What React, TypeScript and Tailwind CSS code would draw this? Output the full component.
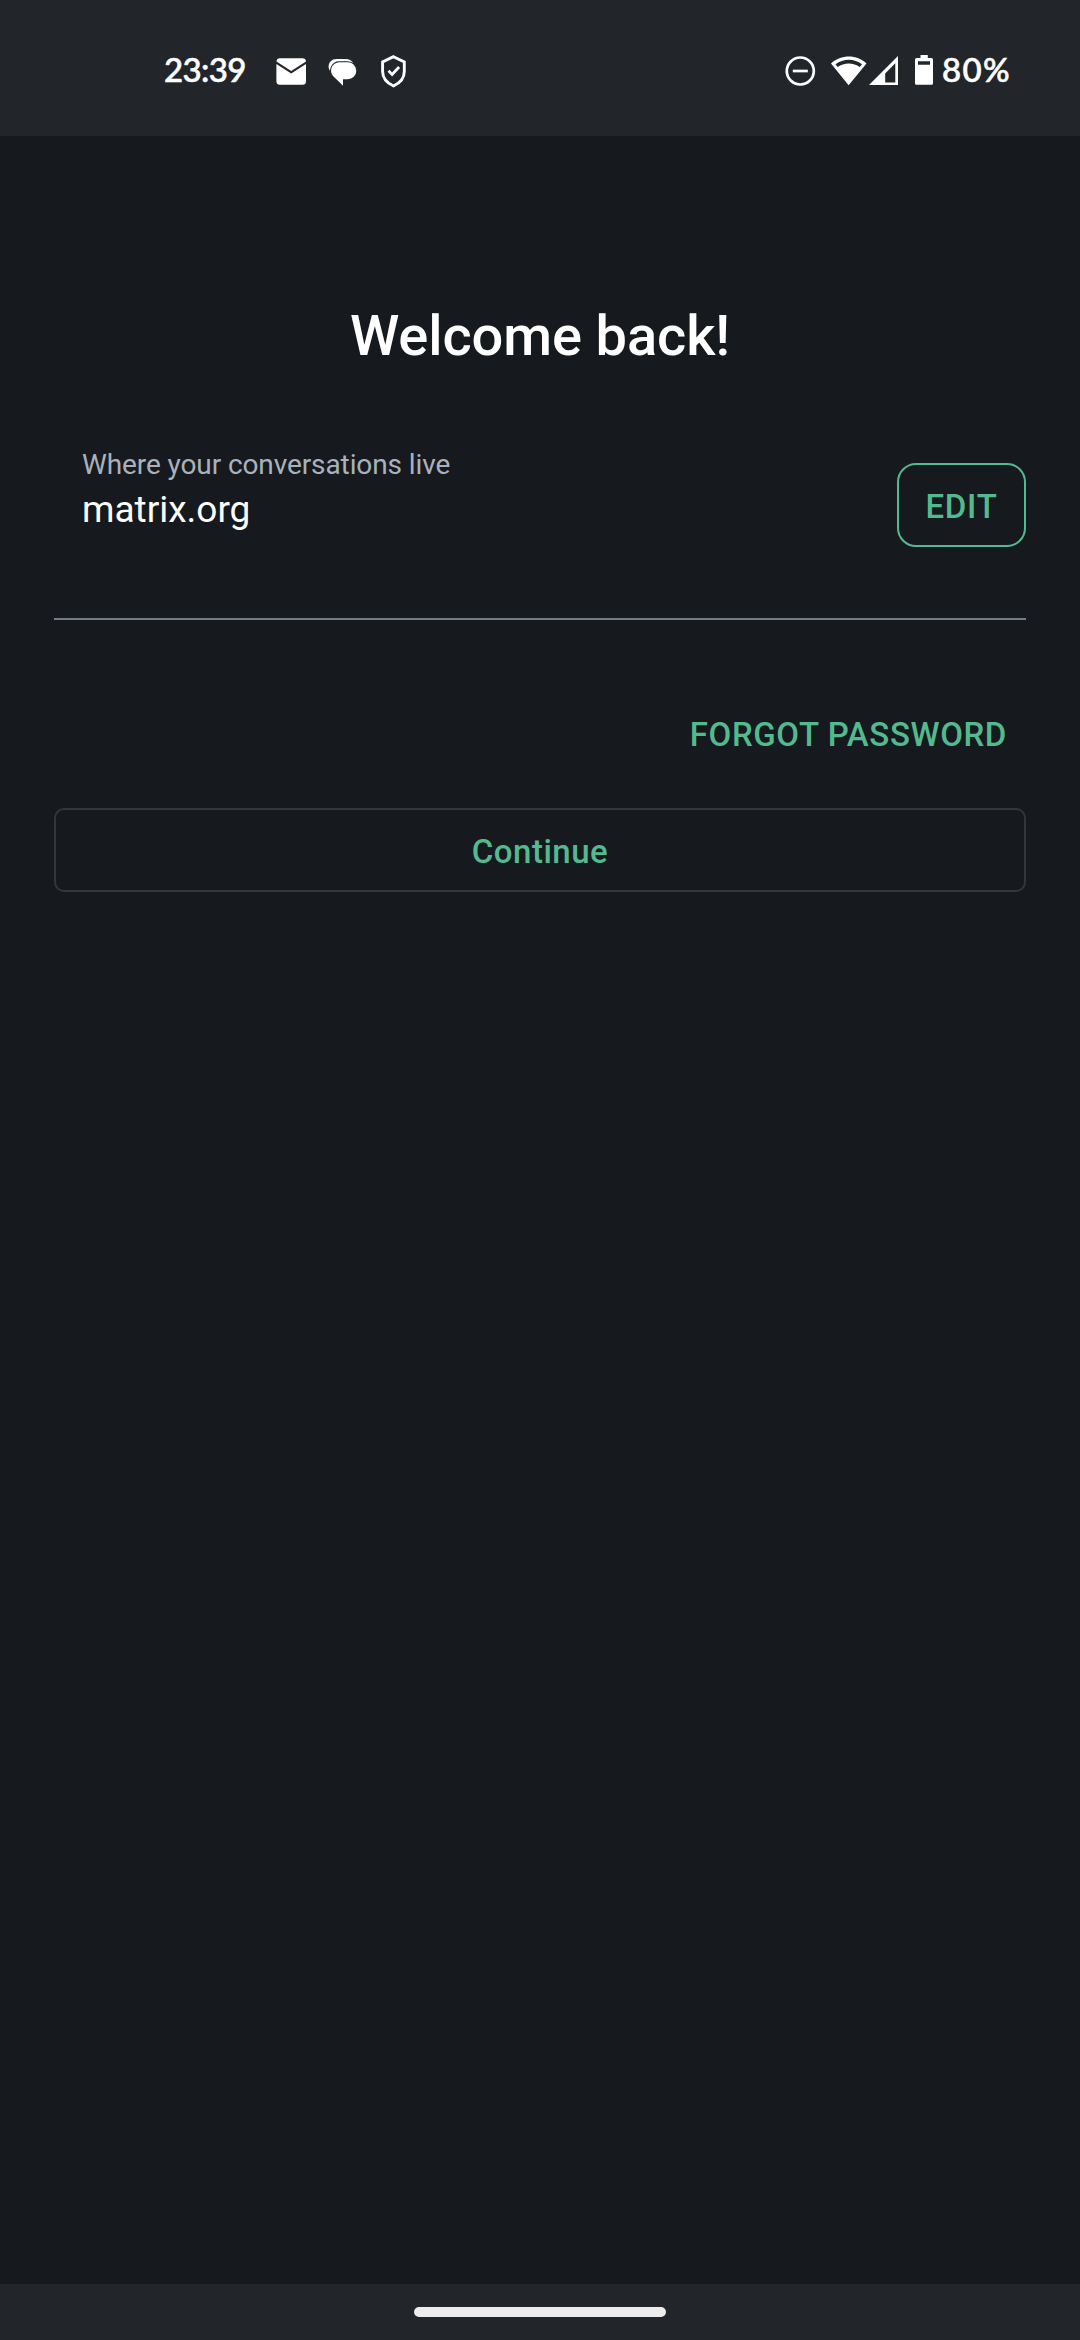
function StatusBar() {
  return (
    <header className="flex h-[136px] shrink-0 items-start justify-between bg-[#22262b] pt-[54px] pr-[69px] pl-[164px] text-white">
      <div className="flex items-start">
        <span className="w-[112px] -translate-y-px font-[Lato] text-[33px] leading-8 font-medium tracking-[-0.6px] [-webkit-text-stroke:0.6px]">23:39</span>
        <svg className="h-8 w-[30px]" viewBox="0 0 30 32" fill="currentColor">
          <path d="M4 4.300h22.500a3.500 3.500 0 0 1 3.500 3.200L15.200 16.900.5 7.500A3.500 3.500 0 0 1 4 4.300Z" />
          <path d="M.4 9.900 15.200 19.600 30 9.900V27.300a3.500 3.500 0 0 1-3.500 3.500H3.900a3.500 3.500 0 0 1-3.500-3.500Z" />
        </svg>
        <svg className="ml-[22px] h-8 w-[30px]" viewBox="0 0 30 32" fill="currentColor">
          <path d="M8.500 5H17.500C21 5 23.500 6.500 25 8.800L12 14 2.500 17.500C-2 12 2 5 8.500 5Z" />
          <path
            d="M11.300 8.200H19.800A8.500 8.500 0 0 1 19.800 25.200H15V31.800L5.300 22.300C.5 17 4 8.200 11.300 8.200Z"
            stroke="#22262b"
            strokeWidth="2"
            paintOrder="stroke"
          />
        </svg>
        <svg className="ml-[23px] h-10 w-[26px] -translate-y-1" viewBox="0 0 26 40" fill="none" stroke="currentColor" strokeWidth="2.900">
          <path d="M12.500 6.700 23.300 12V21.500C23.300 28 19 33 12.500 36 6 33 1.600 28 1.600 21.500V12Z" />
          <path d="m7.500 20.800 3.600 3.700 7-7.500" strokeWidth="2.700" />
        </svg>
      </div>
      <div className="flex items-start">
        <svg className="h-8 w-8" viewBox="0 0 32 32" fill="none" stroke="currentColor" strokeWidth="2.700">
          <circle cx="15.300" cy="17" r="13.500" />
          <path d="M7.800 17h15" />
        </svg>
        <svg className="ml-[14px] h-8 w-9" viewBox="0 0 36 32" fill="currentColor">
          <path fillRule="evenodd" d="M0 9.500C10 .2 26 .2 35.500 9.500L17.600 31.300ZM4.500 10.200 6.700 13.100C13 8.300 22.500 8.300 28.800 13.100L31 10.200C23 4.200 12.500 4.200 4.500 10.200Z" />
        </svg>
        <svg className="ml-[2px] h-8 w-[30px]" viewBox="0 0 30 32" fill="currentColor">
          <path fillRule="evenodd" d="M29 2V31H0ZM26.300 9.300 16.200 19.400V28.600H26.300Z" />
        </svg>
        <svg className="ml-4 h-8 w-[18px]" viewBox="0 0 18 32" fill="currentColor">
          <path fillRule="evenodd" d="M5.500 1h7.300v3H16.500A1.500 1.500 0 0 1 18 5.500V29.300A1.500 1.500 0 0 1 16.500 30.800H1.500A1.500 1.500 0 0 1 0 29.300V5.500A1.500 1.500 0 0 1 1.500 4h4ZM3 7.300v3.400h12V7.300Z" />
        </svg>
        <span className="ml-[9px] w-[69px] -translate-y-px font-[Lato] text-[33px] leading-8 font-medium tracking-[1.4px] whitespace-nowrap [-webkit-text-stroke:0.6px]">80%</span>
      </div>
    </header>
  );
}

export default function App() {
  return (
    <div className="flex h-[2340px] w-[1080px] flex-col bg-[#161a1e] font-[Roboto,sans-serif]">
      <StatusBar />
      <main className="flex flex-1 flex-col px-[54px] pt-[167px]">
        <h1 className="text-center text-[56px] leading-[66px] font-medium tracking-[-0.1px] text-white">Welcome back!</h1>
        <section className="mt-[69px] flex h-[82px] items-start justify-between pl-[28px]">
          <div className="pt-[11px]">
            <p className="text-[28px] leading-8 tracking-[-0.1px] text-[#a9b2bc]">Where your conversations live</p>
            <p className="mt-[7px] text-[37px] leading-[44px] text-white">matrix.org</p>
          </div>
          <button className="mt-[25px] h-[84px] w-[129px] rounded-[19px] border-2 border-[#54b98f] pt-[3px] text-[33px] font-medium tracking-[0.7px] text-[#54b98f]">
            EDIT
          </button>
        </section>
        <hr className="mt-[98px] border-t-2 border-[#757b87]" />
        <button className="mt-[94px] mr-[19px] self-end text-[33px] leading-[42px] font-medium tracking-[0.6px] text-[#54b98f]">
          FORGOT PASSWORD
        </button>
        <button className="mt-[52px] h-[84px] rounded-[10px] border-2 border-[#33373b] pt-[3px] text-[33px] font-medium tracking-[0.5px] text-[#54b98f]">
          Continue
        </button>
      </main>
      <footer className="flex h-[56px] shrink-0 justify-center bg-[#22262b] pt-[23px]">
        <div className="h-[10px] w-[252px] rounded-full bg-[#ededed]" />
      </footer>
    </div>
  );
}
